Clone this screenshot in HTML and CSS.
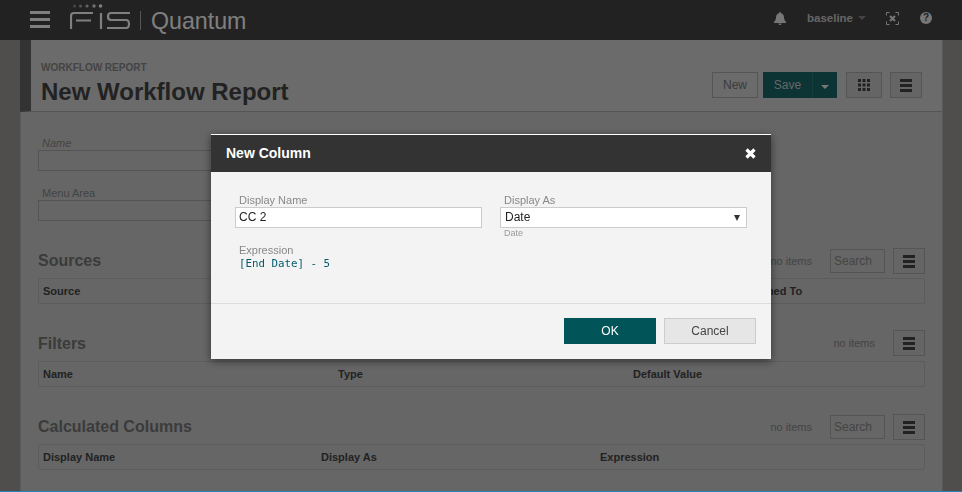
FILE: index.html
```html
<!DOCTYPE html>
<html lang="en">
<head>
    <meta charset="UTF-8">
    <meta name="viewport" content="width=device-width, initial-scale=1.0">
    <title>New Workflow Report</title>
    <link rel="stylesheet" href="styles.css">
</head>
<body>
    <header class="topbar">
        <div class="topbar-left">
            <svg class="burger" width="20" height="18" viewBox="0 0 20 18"><path d="M0 0h20v3H0zM0 7h20v3H0zM0 14h20v3H0z" fill="#fff"/></svg>
            <svg class="logo" width="62" height="26" viewBox="0 0 62 26">
                <g fill="#fff"><circle cx="4.500" cy="2" r="1.500" opacity=".4"/><circle cx="10.500" cy="2" r="1.500" opacity=".55"/><circle cx="17" cy="2" r="1.600" opacity=".7"/><circle cx="24" cy="2" r="1.700" opacity=".85"/><circle cx="30.500" cy="2" r="1.800"/></g>
                <g fill="none" stroke="#fff" stroke-width="2.200"><path d="M1 25V12q0-3 3-3h19M6 16.500h15"/><path d="M31 9v16"/><path d="M60 9H41q-3 0-3 3.500t3 3.500h15q3 0 3 4t-3 4H37"/></g>
            </svg>
            <span class="logo-sep"></span>
            <span class="product">Quantum</span>
        </div>
        <div class="topbar-right">
            <svg class="bell" width="12" height="13" viewBox="0 0 12 13"><path d="M6 0q1 0 1 1.200Q10 2 10 5.500q0 3 2 4.500v1H0v-1q2-1.500 2-4.500Q2 2 5 1.200 5 0 6 0zM4.500 11.500h3Q7.500 13 6 13t-1.500-1.500z" fill="#eee"/></svg>
            <span class="user">baseline <i class="caret"></i></span>
            <svg class="focus" width="13" height="13" viewBox="0 0 13 13"><path d="M.5 3.500v-3h3M9.500.5h3v3M12.500 9.500v3h-3M3.500 12.500h-3v-3" fill="none" stroke="#eee"/><path d="M4 4l5 5M9 4L4 9" stroke="#eee" stroke-width="2"/></svg>
            <span class="help">?</span>
        </div>
    </header>

    <div class="page">
        <main class="content">
            <div class="page-head">
                <div>
                    <div class="eyebrow">WORKFLOW REPORT</div>
                    <h1>New Workflow Report</h1>
                </div>
                <div class="actions">
                    <button class="btn btn-new">New</button>
                    <div class="btn-save"><span class="save-label">Save</span><span class="save-drop"><i class="caret"></i></span></div>
                    <button class="btn btn-icon btn-grid">
                        <svg width="12" height="12" viewBox="0 0 12 12"><path d="M0 0h3v3H0zM4.500 0h3v3h-3zM9 0h3v3H9zM0 4.500h3v3H0zM4.500 4.500h3v3h-3zM9 4.500h3v3H9zM0 9h3v3H0zM4.500 9h3v3h-3zM9 9h3v3H9z" fill="#444"/></svg>
                    </button>
                    <button class="btn btn-icon btn-menu btn-head-menu">
                        <svg width="12" height="13" viewBox="0 0 12 13"><path d="M0 0h12v3H0zM0 5h12v3H0zM0 10h12v3H0z" fill="#444"/></svg>
                    </button>
                </div>
            </div>

            <div class="body">
                <div class="field">
                    <label class="name-label">Name</label>
                    <input class="input" type="text">
                </div>
                <div class="field field-menu">
                    <label>Menu Area</label>
                    <input class="input" type="text">
                </div>

                <section class="section section-sources">
                    <div class="section-head">
                        <h2>Sources</h2>
                        <div class="tools">
                            <span class="count">no items</span>
                            <span class="search">Search</span>
                            <button class="btn btn-icon btn-menu"><svg width="12" height="13" viewBox="0 0 12 13"><path d="M0 0h12v3H0zM0 5h12v3H0zM0 10h12v3H0z" fill="#444"/></svg></button>
                        </div>
                    </div>
                    <div class="grid-head">
                        <span class="col-source">Source</span>
                        <span class="col-joined">Joined To</span>
                    </div>
                </section>

                <section class="section section-filters">
                    <div class="section-head">
                        <h2>Filters</h2>
                        <div class="tools">
                            <span class="count">no items</span>
                            <button class="btn btn-icon btn-menu"><svg width="12" height="13" viewBox="0 0 12 13"><path d="M0 0h12v3H0zM0 5h12v3H0zM0 10h12v3H0z" fill="#444"/></svg></button>
                        </div>
                    </div>
                    <div class="grid-head">
                        <span class="col-name">Name</span>
                        <span class="col-type">Type</span>
                        <span>Default Value</span>
                    </div>
                </section>

                <section class="section section-calc">
                    <div class="section-head">
                        <h2>Calculated Columns</h2>
                        <div class="tools">
                            <span class="count">no items</span>
                            <span class="search">Search</span>
                            <button class="btn btn-icon btn-menu"><svg width="12" height="13" viewBox="0 0 12 13"><path d="M0 0h12v3H0zM0 5h12v3H0zM0 10h12v3H0z" fill="#444"/></svg></button>
                        </div>
                    </div>
                    <div class="grid-head">
                        <span class="col-display">Display Name</span>
                        <span class="col-as">Display As</span>
                        <span>Expression</span>
                    </div>
                </section>
            </div>
        </main>
    </div>

    <div class="overlay">
        <div class="modal">
            <div class="modal-head">
                <span>New Column</span>
                <svg width="11" height="11" viewBox="0 0 11 11"><path d="M1.500 1.500l8 8M9.500 1.500l-8 8" stroke="#fff" stroke-width="3.200"/></svg>
            </div>
            <div class="modal-body">
                <div class="modal-row">
                    <div class="modal-field">
                        <label>Display Name</label>
                        <div class="modal-input">CC 2</div>
                    </div>
                    <div class="modal-field">
                        <label>Display As</label>
                        <div class="modal-input modal-select">Date<i class="select-arrow"></i></div>
                        <div class="hint">Date</div>
                    </div>
                </div>
                <div class="expr">
                    <label>Expression</label>
                    <code>[End Date] - 5</code>
                </div>
            </div>
            <div class="modal-foot">
                <button class="modal-btn ok">OK</button>
                <button class="modal-btn cancel">Cancel</button>
            </div>
        </div>
    </div>
    <div class="bottom-line"></div>
</body>
</html>
```

FILE: styles.css
```css
* {
    box-sizing: border-box;
}
html, body {
    height: 492px;
    overflow: hidden;
}
body {
    margin: 0;
    font-family: "Liberation Sans", Arial, sans-serif;
    font-size: 12px;
    color: #444;
    background: #9e9d98;
}
button {
    font-family: inherit;
}

/* top bar */
.topbar {
    height: 40px;
    background: #444;
    display: flex;
    justify-content: space-between;
    align-items: center;
    color: #fff;
}
.topbar-left {
    display: flex;
    align-items: center;
    padding-left: 30px;
}
.burger {
    margin-right: 20px;
}
.logo {
    margin-top: -6px;
    margin-right: 8px;
}
.logo-sep {
    width: 1px;
    height: 19px;
    margin-top: 1px;
    background: #aaa;
    margin-right: 10px;
}
.product {
    font-size: 23.200px;
    margin-top: 2px;
    color: #fff;
}
.topbar-right {
    display: flex;
    align-items: center;
    padding-right: 30px;
    padding-bottom: 4px;
}
.bell {
    margin-right: 21px;
}
.user {
    font-size: 11.500px;
    font-weight: bold;
    color: #ccc;
    margin-right: 20px;
    display: flex;
    align-items: center;
    gap: 5px;
}
.user .caret {
    border-top-color: #888;
}
.focus {
    margin-right: 21px;
}
.help {
    width: 12px;
    height: 12px;
    border-radius: 50%;
    background: #eee;
    color: #444;
    font-size: 10px;
    font-weight: bold;
    line-height: 12px;
    text-align: center;
}
.caret {
    display: inline-block;
    width: 0;
    height: 0;
    border-left: 4px solid transparent;
    border-right: 4px solid transparent;
    border-top: 4px solid #eee;
}

/* page */
.page {
    padding-left: 20px;
    padding-right: 19px;
}
.content {
    height: 452px;
    background: #ccc;
    border-left: 1px solid #b4b4b4;
    border-right: 1px solid #b4b4b4;
}
.page-head {
    height: 72px;
    background: #d6d6d6;
    border-bottom: 1px solid #aaa;
    border-left: 11px solid #666;
    margin-left: -1px;
    padding: 22px 20px 0 10px;
    display: flex;
    justify-content: space-between;
}
.eyebrow {
    font-size: 10px;
    font-weight: bold;
    color: #888;
    line-height: 12px;
}
h1 {
    margin: 4px 0 0;
    font-size: 24px;
    line-height: 28px;
    color: #444;
}
.actions {
    display: flex;
    gap: 5px;
    padding-top: 10px;
}
.btn {
    height: 26px;
    padding: 0;
    border: 1px solid #aaa;
    background: #cacaca;
    color: #777;
    font-size: 12px;
}
.btn-new {
    width: 46px;
    background: #d6d6d6;
}
.btn-icon {
    width: 36px;
    display: flex;
    align-items: center;
    justify-content: center;
}
.btn-grid {
    margin-left: 4px;
}
.btn-head-menu {
    margin-left: 3px;
}
.btn-save {
    width: 74px;
    height: 26px;
    background: #1b686b;
    color: #ccc;
    display: flex;
    align-items: center;
    font-size: 12px;
}
.save-label {
    width: 50px;
    text-align: center;
    border-right: 1px solid #2a7679;
    line-height: 26px;
}
.save-drop {
    width: 24px;
    text-align: center;
    line-height: 20px;
}
.body {
    padding: 0 17px;
}
.field {
    padding-top: 25px;
}
.field label {
    display: block;
    font-size: 11px;
    color: #888;
    line-height: 13px;
    padding-left: 4px;
}
.field-menu {
    padding-top: 16px;
}
.name-label {
    font-style: italic;
}
.input {
    display: block;
    width: 400px;
    height: 21px;
    border: 1px solid #a8a8a8;
    background: #ccc;
    margin: 0;
}
.section-head {
    display: flex;
    justify-content: space-between;
    align-items: center;
    height: 26px;
}
h2 {
    margin: 0;
    font-size: 16px;
    color: #777;
}
.tools {
    display: flex;
    align-items: center;
}
.count {
    font-size: 11px;
    color: #888;
    margin-right: 18px;
}
.search {
    width: 55px;
    height: 24px;
    border: 1px solid #a8a8a8;
    background: #ccc;
    color: #8a8a8a;
    font-size: 12px;
    line-height: 22px;
    padding-left: 3px;
    margin-right: 8px;
}
.btn-menu {
    width: 32px;
    height: 26px;
}
.section-sources {
    margin-top: 27px;
}
.section-filters {
    margin-top: 26px;
}
.section-filters h2 {
    margin-top: 2px;
}
.section-calc {
    margin-top: 27px;
}
.grid-head {
    height: 26px;
    margin-top: 4px;
    border: 1px solid #b8b8b8;
    border-radius: 2px;
    padding-left: 4px;
    display: flex;
    align-items: center;
    font-size: 11px;
    font-weight: bold;
    color: #444;
}
.section-filters .grid-head {
    margin-top: 5px;
}
.col-source {
    width: 708px;
}
.col-name {
    width: 295px;
}
.col-type {
    width: 295px;
}
.col-display {
    width: 278px;
}
.col-as {
    width: 279px;
}

/* dialog */
.overlay {
    position: fixed;
    inset: 0;
    background: rgba(0, 0, 0, 0.5);
    padding: 134px 0 0 211px;
}
.modal {
    width: 560px;
    height: 225px;
    background: #f3f3f3;
    border-top: 1px solid #fff;
    box-shadow: 0 2px 8px rgba(0, 0, 0, 0.5);
    display: flex;
    flex-direction: column;
}
.modal-head {
    height: 37px;
    flex: none;
    background: #333;
    color: #fff;
    font-size: 14px;
    font-weight: bold;
    padding: 0 15px 2px;
    display: flex;
    align-items: center;
    justify-content: space-between;
}
.modal-head svg {
    margin-top: 1px;
}
.modal-body {
    flex: 1;
    padding: 22px 24px 0;
    border-bottom: 1px solid #ddd;
}
.modal-row {
    display: flex;
    justify-content: space-between;
}
.modal-field {
    width: 247px;
}
.modal-body label {
    display: block;
    font-size: 11px;
    line-height: 13px;
    color: #888;
    padding-left: 4px;
}
.modal-input {
    height: 21px;
    border: 1px solid #ccc;
    background: #fff;
    font-size: 12px;
    color: #222;
    line-height: 19px;
    padding-left: 3px;
}
.modal-select {
    display: flex;
    justify-content: space-between;
    align-items: center;
    padding: 0 6px 0 4px;
}
.select-arrow {
    width: 0;
    height: 0;
    border-left: 3px solid transparent;
    border-right: 3px solid transparent;
    border-top: 6px solid #333;
}
.hint {
    font-size: 9px;
    color: #999;
    line-height: 11px;
    padding-left: 4px;
}
.expr {
    margin-top: 5px;
}
.expr code {
    display: block;
    font-family: "DejaVu Sans Mono", monospace;
    font-size: 10.800px;
    line-height: 13px;
    color: #005b6b;
    padding-left: 4px;
}
.modal-foot {
    height: 55px;
    flex: none;
    padding: 14px 15px 0 0;
    display: flex;
    justify-content: flex-end;
    gap: 8px;
}
.modal-btn {
    width: 92px;
    height: 26px;
    font-size: 12px;
}
.ok {
    background: #015558;
    border: 0;
    color: #fff;
}
.cancel {
    background: #e6e6e6;
    border: 1px solid #ccc;
    color: #444;
}
.bottom-line {
    position: fixed;
    left: 0;
    right: 0;
    bottom: 0;
    height: 1px;
    background: #2c7fb8;
}
```
